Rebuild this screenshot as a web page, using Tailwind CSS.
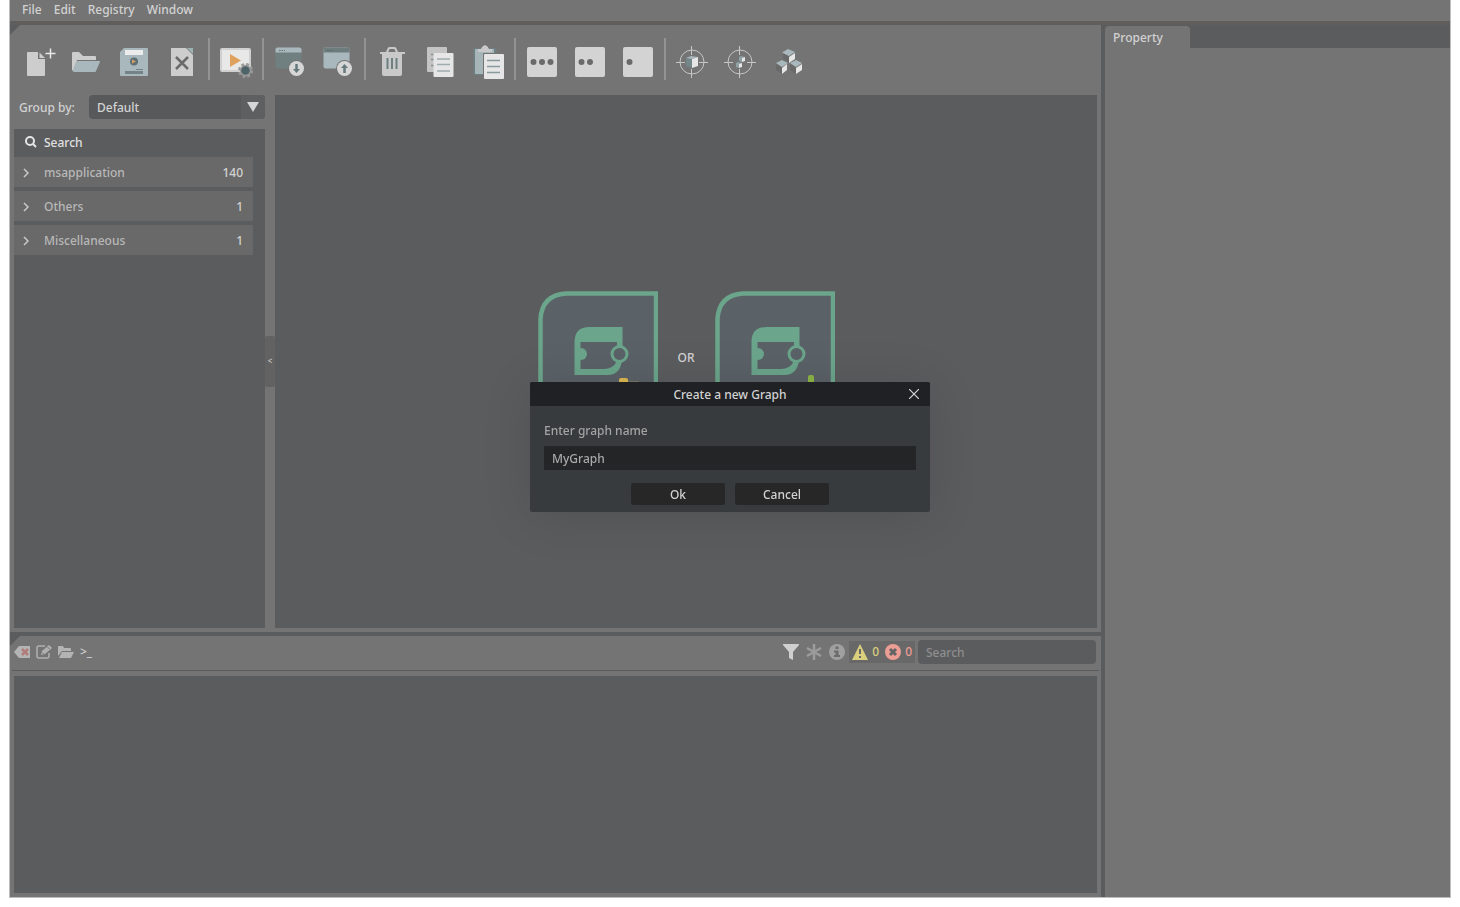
<!DOCTYPE html>
<html lang="en">
  <head>
    <meta charset="UTF-8" />
    <meta name="viewport" content="width=device-width, initial-scale=1.0" />
    <title>Graph Editor</title>
    <script src="https://cdn.jsdelivr.net/npm/@tailwindcss/browser@4"></script>
  </head>
  <body class="bg-white">
    <div class="h-screen px-[9px] pb-[9px] font-['Noto_Sans','Open_Sans',sans-serif] text-xs font-medium text-[#d2d2d2]">
      <div class="flex h-full flex-col border-x border-b border-[#bdbdbd] bg-[#5b5c5e]">
        <!-- Menu bar -->
        <nav class="flex h-[21px] shrink-0 items-center gap-3 bg-[#747474] px-3 pb-[2px]">
          <a href="#">File</a>
          <a href="#">Edit</a>
          <a href="#">Registry</a>
          <a href="#">Window</a>
        </nav>
        <div class="h-1 shrink-0 bg-[#5f5e5c]"></div>

        <div class="flex min-h-0 flex-1 gap-1">
          <div class="flex min-w-0 flex-1 flex-col gap-1">
            <!-- Graph editor -->
            <section class="flex min-h-0 flex-[603] flex-col bg-[#747474] px-1 pb-1 [clip-path:polygon(10px_0,100%_0,100%_100%,0_100%,0_10px)]">
              <div class="flex h-[70px] shrink-0 items-start pt-[13px]">
                <button aria-label="New graph">
                  <svg class="size-12" viewBox="0 0 48 48">
                    <path d="M13 15q0-1 1-1h10v7h7v16q0 1-1 1H14q-1 0-1-1z" fill="#cdcdcd" />
                    <path d="M25.500 14.500v5.500h5.500z" fill="#cdcdcd" />
                    <path d="M36.500 10.500v10M31.500 15.500h10" stroke="#e8e8e8" stroke-width="1.500" />
                  </svg>
                </button>
                <button aria-label="Open graph">
                  <svg class="size-12" viewBox="0 0 48 48">
                    <path d="M10 32V15q0-1 1-1h6l4 4h12q1 0 1 1v3H15l-4 11z" fill="#cdcdcd" />
                    <path d="M15 23h22q1 0 1 1l-4 9q0 1-1 1H12q-1 0-1-1l3-9q0-1 1-1z" fill="#a9b8bd" />
                  </svg>
                </button>
                <button aria-label="Save graph">
                  <svg class="size-12" viewBox="0 0 48 48">
                    <path d="M14 10h23q1 0 1 1v26q0 1-1 1H11q-1 0-1-1V14z" fill="#a9b8bd" />
                    <path d="M15 12h18v5H15z" fill="#ececec" />
                    <circle cx="24" cy="23.500" r="4" fill="#5c7075" />
                    <path d="M22 21.500l4 2-4 2z" fill="#dea05a" />
                    <path d="M15 33h18v3H15z" fill="#738386" />
                    <path d="M26 31.500h7" stroke="#738386" />
                  </svg>
                </button>
                <button aria-label="Close graph">
                  <svg class="size-12" viewBox="0 0 48 48">
                    <path d="M13 10h15l7 7v21H13z" fill="#cdcdcd" />
                    <path d="M29 10h6v6z" fill="#9fb3b5" />
                    <path d="M18 19l12 12M30 19L18 31" stroke="#6b6b6b" stroke-width="2.500" />
                  </svg>
                </button>
                <div class="mx-[2px] h-[42px] w-[2px] bg-[#939393]"></div>
                <button aria-label="Start computing">
                  <svg class="size-12" viewBox="0 0 48 48">
                    <rect x="9" y="11" width="29" height="22" rx="1" fill="#e8e8e8" stroke="#d0d0d0" stroke-width="2" />
                    <path d="M18 16l11 6.500L18 29z" fill="#dfa25c" />
                    <circle cx="33.500" cy="32.500" r="6" fill="none" stroke="#9a9a9a" stroke-width="3" stroke-dasharray="2.700 2" />
                    <circle cx="33.500" cy="32.500" r="5" fill="#4d6368" stroke="#9a9a9a" stroke-width="1.500" />
                  </svg>
                </button>
                <div class="mx-[2px] h-[42px] w-[2px] bg-[#939393]"></div>
                <button aria-label="Import">
                  <svg class="size-12" viewBox="0 0 48 48">
                    <rect x="9.500" y="9.500" width="26" height="21" rx="2" fill="#708081" />
                    <path d="M9.500 14.500v-3q0-2 2-2h22q2 0 2 2v3z" fill="#a9b8bd" />
                    <path d="M13 12.500h6" stroke="#657475" stroke-dasharray="1.500 1" />
                    <circle cx="30.500" cy="30.500" r="8.500" fill="#747474" />
                    <circle cx="30.500" cy="30.500" r="7.500" fill="#d6d6d6" />
                    <path d="M30.500 26v7" stroke="#65787b" stroke-width="2.500" />
                    <path d="M27 31h7l-3.500 4z" fill="#65787b" />
                  </svg>
                </button>
                <button aria-label="Export">
                  <svg class="size-12" viewBox="0 0 48 48">
                    <rect x="9.500" y="9.500" width="26" height="21" rx="2" fill="#a9b8bd" />
                    <path d="M9.500 14.500v-3q0-2 2-2h22q2 0 2 2v3z" fill="#6d7d7e" />
                    <path d="M13 12.500h6" stroke="#556566" stroke-dasharray="1.500 1" />
                    <circle cx="30.500" cy="30.500" r="8.500" fill="#747474" />
                    <circle cx="30.500" cy="30.500" r="7.500" fill="#d6d6d6" />
                    <path d="M30.500 28v7" stroke="#65787b" stroke-width="2.500" />
                    <path d="M27 30h7l-3.500-4z" fill="#65787b" />
                  </svg>
                </button>
                <div class="mx-[2px] h-[42px] w-[2px] bg-[#939393]"></div>
                <button aria-label="Delete">
                  <svg class="size-12" viewBox="0 0 48 48">
                    <path d="M18.500 15l2-4q0-1 1-1h5q1 0 1 1l2 4" fill="none" stroke="#c9c9c9" stroke-width="2" />
                    <path d="M12 14h25v2H12z" fill="#c9c9c9" />
                    <path d="M14 16h20v20q0 2-2 2H16q-2 0-2-2z" fill="#c9c9c9" />
                    <path d="M19.500 20v11M24 20v11M28.500 20v11" stroke="#6d7f80" stroke-width="2" />
                  </svg>
                </button>
                <button aria-label="Copy">
                  <svg class="size-12" viewBox="0 0 48 48">
                    <rect x="11" y="9" width="20" height="25" rx="1" fill="#c4c4c4" />
                    <path d="M15 16.500h3M15 21.500h3M15 27.500h3" stroke="#81918f" stroke-width="1.500" />
                    <rect x="17.500" y="15" width="20" height="24" rx="1" fill="#e6e6e6" />
                    <path d="M21 21h13M21 26.500h13M21 33h13" stroke="#9eacae" stroke-width="1.500" />
                  </svg>
                </button>
                <button aria-label="Paste">
                  <svg class="size-12" viewBox="0 0 48 48">
                    <rect x="9.500" y="10" width="23" height="27" rx="1" fill="#6c8083" />
                    <rect x="11" y="11" width="19" height="25" fill="#a6b5b8" />
                    <path d="M14 14v-3h3q1-3 4-4 3 1 4 4h3v3z" fill="#c9c9c9" />
                    <rect x="19" y="15" width="21" height="25" rx="1" fill="#747474" />
                    <rect x="20" y="16" width="20" height="25" rx="1" fill="#e6e6e6" />
                    <path d="M23 22.500h13M23 28.500h13M23 34.500h13" stroke="#87999c" stroke-width="1.500" />
                  </svg>
                </button>
                <div class="mx-[2px] h-[42px] w-[2px] bg-[#939393]"></div>
                <button aria-label="Maximal view">
                  <svg class="size-12" viewBox="0 0 48 48" fill="#6a6a6a">
                    <rect x="9" y="9" width="30" height="30" rx="2" fill="#d3d3d3" />
                    <circle cx="15.500" cy="24" r="3" />
                    <circle cx="24" cy="24" r="3" />
                    <circle cx="32.500" cy="24" r="3" />
                  </svg>
                </button>
                <button aria-label="Medium view">
                  <svg class="size-12" viewBox="0 0 48 48" fill="#6a6a6a">
                    <rect x="9" y="9" width="30" height="30" rx="2" fill="#d3d3d3" />
                    <circle cx="15.500" cy="24" r="3" />
                    <circle cx="24" cy="24" r="3" />
                  </svg>
                </button>
                <button aria-label="Minimal view">
                  <svg class="size-12" viewBox="0 0 48 48" fill="#6a6a6a">
                    <rect x="9" y="9" width="30" height="30" rx="2" fill="#d3d3d3" />
                    <circle cx="15.500" cy="24" r="3" />
                  </svg>
                </button>
                <div class="mx-[2px] h-[42px] w-[2px] bg-[#939393]"></div>
                <button aria-label="Center selected node">
                  <svg class="size-12" viewBox="0 0 48 48">
                    <circle cx="24" cy="24" r="12" fill="none" stroke="#c6c6c6" />
                    <path d="M8 24.500h9M31 24.500h9M23.500 8v9M23.500 31v9" stroke="#c6c6c6" />
                    <path d="M18 20l6 1v9l-6-2z" fill="#73868a" />
                    <path d="M18 20l5-2 7 1-6 2z" fill="#a9b8bd" />
                    <path d="M24 21l6-2v9l-6 2z" fill="#e6e6e6" />
                  </svg>
                </button>
                <button aria-label="Center all nodes">
                  <svg class="size-12" viewBox="0 0 48 48">
                    <circle cx="24" cy="24" r="12" fill="none" stroke="#c6c6c6" />
                    <path d="M8 24.500h9M31 24.500h9M23.500 8v9M23.500 31v9" stroke="#c6c6c6" />
                    <path d="M23 19l2-1 4 1-3 1v4l-3-1z" fill="#91a2a6" />
                    <path d="M26 20l3-1v4l-3 1z" fill="#e6e6e6" />
                    <path d="M20 25l2-1 4 1-3 1v4l-3-1z" fill="#91a2a6" />
                    <path d="M23 26l3-1v4l-3 1z" fill="#e6e6e6" />
                  </svg>
                </button>
                <button aria-label="Arrange nodes">
                  <svg class="size-12" viewBox="0 0 48 48">
                    <path d="M19 15l6 4v6l-6-4zM12 26l6 4v6l-6-4zM26 26l6 4v6l-6-4z" fill="#696969" />
                    <path d="M18 14.500l6-3.500 7 3-6 4zM12 25l6-3 6 3-6 4zM26 25l6-3 6 3-6 4z" fill="#a9b8bd" />
                    <path d="M25 19l6-4v6l-6 4zM18 30l5-4v6l-5 4zM32 30l6-4v6l-6 4z" fill="#e6e6e6" />
                  </svg>
                </button>
              </div>

              <div class="flex min-h-0 flex-1">
                <!-- Node library -->
                <aside class="flex w-[251px] shrink-0 flex-col gap-[10px]">
                  <div class="flex h-6 shrink-0 items-center justify-between pl-[5px]">
                    <label for="group" class="pt-[2px]">Group by:</label>
                    <div class="relative h-6 w-44 overflow-hidden rounded bg-[#58595b]">
                      <select id="group" class="h-6 w-full appearance-none px-2 pt-[2px]">
                        <option>Default</option>
                      </select>
                      <div class="pointer-events-none absolute inset-y-0 right-0 flex w-6 items-center justify-center bg-[#5e5f60]">
                        <svg class="h-[10px] w-3" viewBox="0 0 12 10"><path d="M0 0h12L6 10z" fill="#d6d6d6" /></svg>
                      </div>
                    </div>
                  </div>
                  <div class="flex-1 bg-[#5b5c5e]">
                    <div class="flex h-7 items-center gap-[7px] pb-[2px] pl-[11px]">
                      <svg class="size-3" viewBox="0 0 12 12" fill="none" stroke="#e4e4e4" stroke-width="2">
                        <circle cx="5" cy="5" r="4" />
                        <path d="M8 8l3 3" />
                      </svg>
                      <input aria-label="Search nodes" placeholder="Search" class="h-6 w-44 outline-none placeholder:text-[#e0e0e0]" />
                    </div>
                    <ul class="flex flex-col gap-1 pr-3">
                      <li class="flex h-[30px] items-center bg-[#696969] pt-[2px] pr-[10px] pl-[9px]">
                        <svg class="mr-[15px] h-[10px] w-[6px]" viewBox="0 0 6 10" fill="none" stroke="#cacaca" stroke-width="1.500"><path d="M1 1l4 4-4 4" /></svg>
                        <span class="flex-1 text-[#b8b8b8]">msapplication</span>
                        <span>140</span>
                      </li>
                      <li class="flex h-[30px] items-center bg-[#696969] pt-[2px] pr-[10px] pl-[9px]">
                        <svg class="mr-[15px] h-[10px] w-[6px]" viewBox="0 0 6 10" fill="none" stroke="#cacaca" stroke-width="1.500"><path d="M1 1l4 4-4 4" /></svg>
                        <span class="flex-1 text-[#b8b8b8]">Others</span>
                        <span>1</span>
                      </li>
                      <li class="flex h-[30px] items-center bg-[#696969] pt-[2px] pr-[10px] pl-[9px]">
                        <svg class="mr-[15px] h-[10px] w-[6px]" viewBox="0 0 6 10" fill="none" stroke="#cacaca" stroke-width="1.500"><path d="M1 1l4 4-4 4" /></svg>
                        <span class="flex-1 text-[#b8b8b8]">Miscellaneous</span>
                        <span>1</span>
                      </li>
                    </ul>
                  </div>
                </aside>
                <div class="flex w-[10px] shrink-0 items-center">
                  <button aria-label="Collapse" class="h-[51px] w-[10px] rounded-xs bg-[#626262] text-[8px]">&lt;</button>
                </div>

                <!-- Canvas -->
                <main class="flex flex-1 items-center justify-center gap-5 bg-[#5b5c5e] pb-[9px]">
                  <button aria-label="Create a graph" class="h-[132px] w-[120px]">
                    <svg class="h-[132px] w-[120px]" viewBox="0 0 120 132">
                      <path d="M2.500 130V28Q4 4 28 2.500h90V130z" fill="#5a6167" stroke="#6ba58b" stroke-width="4.500" />
                      <path fill-rule="evenodd" d="M36.500 84V51q0-15 15-15h33v27q0 21-15 21zM42.500 51v27H66q9 0 13-8V51z" fill="#6ba58b" />
                      <circle cx="43" cy="63" r="6" fill="#6ba58b" />
                      <circle cx="81.500" cy="63" r="7.500" fill="#5a6167" stroke="#6ba58b" stroke-width="3" />
                      <rect x="81" y="87" width="9" height="20" rx="2" fill="#dcb850" />
                      <path d="M90 90.500h11" stroke="#7a7763" />
                    </svg>
                  </button>
                  <span class="pt-[2px]">OR</span>
                  <button aria-label="Load a graph" class="h-[132px] w-[120px]">
                    <svg class="h-[132px] w-[120px]" viewBox="0 0 120 132">
                      <path d="M2.500 130V28Q4 4 28 2.500h90V130z" fill="#5a6167" stroke="#6ba58b" stroke-width="4.500" />
                      <path fill-rule="evenodd" d="M36.500 84V51q0-15 15-15h33v27q0 21-15 21zM42.500 51v27H66q9 0 13-8V51z" fill="#6ba58b" />
                      <circle cx="43" cy="63" r="6" fill="#6ba58b" />
                      <circle cx="81.500" cy="63" r="7.500" fill="#5a6167" stroke="#6ba58b" stroke-width="3" />
                      <rect x="93" y="84" width="6" height="20" rx="2" fill="#8db545" />
                    </svg>
                  </button>
                </main>
              </div>
            </section>

            <!-- Console -->
            <section class="flex min-h-0 flex-[257] flex-col bg-[#747474] pb-1 [clip-path:polygon(10px_0,100%_0,100%_100%,0_100%,0_10px)]">
              <div class="mx-[2px] flex h-[35px] shrink-0 items-center justify-between border-b border-[#5b5c5e] pr-[3px] pb-[2px] pl-[2px]">
                <div class="flex items-center gap-[6px]">
                  <button aria-label="Clear">
                    <svg class="size-4" viewBox="0 0 16 16">
                      <path d="M0 8l5-6h11v12H5z" fill="#b4b4b4" />
                      <path d="M8 5l6 6M14 5l-6 6" stroke="#b27c7a" stroke-width="2.500" />
                    </svg>
                  </button>
                  <button aria-label="Edit log">
                    <svg class="size-4" viewBox="0 0 16 16" fill="none" stroke="#b0b0b0" stroke-width="1.500">
                      <path d="M9 2H3Q1 2 1 4v8q0 2 2 2h8q2 0 2-2V9" />
                      <path d="M5 11l1-4 7-6 3 3-7 6z" fill="#b0b0b0" stroke="none" />
                      <path d="M11.500 3l2 2M6 8.500l1.500 1.500" stroke="#747474" stroke-width="1" />
                    </svg>
                  </button>
                  <button aria-label="Open log">
                    <svg class="size-4" viewBox="0 0 16 16" fill="#b4b4b4">
                      <path d="M0 12V3q0-1 1-1h4l1 2h6q1 0 1 1v2H4z" />
                      <path d="M4 8h12l-3 6H1z" />
                    </svg>
                  </button>
                  <button aria-label="Terminal">&gt;_</button>
                </div>
                <div class="flex items-center">
                  <div class="mr-1 flex gap-[7px]">
                    <button aria-label="Filter">
                      <svg class="size-4" viewBox="0 0 16 16"><path d="M0 0h16v1l-6 7v8l-4-2V8L0 1z" fill="#cfcfcf" /></svg>
                    </button>
                    <button aria-label="All messages">
                      <svg class="size-4" viewBox="0 0 16 16"><path d="M8 0v16M1 4l14 8M15 4L1 12" stroke="#9c9c9c" stroke-width="2.500" /></svg>
                    </button>
                    <button aria-label="Information">
                      <svg class="size-4" viewBox="0 0 16 16">
                        <circle cx="8" cy="8" r="8" fill="#a0a0a0" />
                        <path d="M6.500 2.500h3v2.500h-3zM5 6.500h4.500V11H11v2H5v-2h1.500V8.500H5z" fill="#6c6c6c" />
                      </svg>
                    </button>
                  </div>
                  <div class="mr-[3px] flex h-[22px] items-center gap-[6px] bg-[#686868] px-[3px]">
                    <button class="flex items-center gap-1 text-[#d9cf7c]">
                      <svg class="size-4" viewBox="0 0 16 16">
                        <path d="M8 0l8 16H0z" fill="#d9cf7c" />
                        <path d="M7 5h2v5H7zM7 12h2v2H7z" fill="#686868" />
                      </svg>
                      0
                    </button>
                    <button class="flex items-center gap-1 text-[#ec9d94]">
                      <svg class="size-4" viewBox="0 0 16 16">
                        <circle cx="8" cy="8" r="8" fill="#ec9d94" />
                        <path d="M5 5l6 6M11 5l-6 6" stroke="#646464" stroke-width="3" />
                      </svg>
                      0
                    </button>
                  </div>
                  <input aria-label="Search log" placeholder="Search" class="h-6 w-[178px] rounded bg-[#5b5c5e] px-2 outline-none placeholder:text-[#8e8e8e]" />
                </div>
              </div>
              <div class="mx-1 mt-[5px] flex-1 bg-[#5b5c5e]"></div>
            </section>
          </div>

          <!-- Property panel -->
          <aside class="flex w-[345px] shrink-0 flex-col pt-px">
            <h2 class="flex h-[22px] w-[85px] shrink-0 items-center rounded-t bg-[#747474] px-2 pt-[2px]">Property</h2>
            <div class="flex-1 bg-[#747474]"></div>
          </aside>
        </div>
      </div>

      <!-- Create graph dialog -->
      <div class="fixed inset-0 flex items-center justify-center pb-[13px]">
        <form role="dialog" aria-labelledby="dialog-title" class="w-[400px] overflow-hidden rounded-xs bg-[#373b3e] shadow-[0_4px_50px_rgba(0,0,0,0.12)]">
          <div class="relative flex h-6 items-center justify-center bg-[#202124]">
            <h1 id="dialog-title" class="pt-[2px]">Create a new Graph</h1>
            <button type="button" aria-label="Close" class="absolute right-[11px]">
              <svg class="size-[10px]" viewBox="0 0 10 10"><path d="M0 0l10 10M10 0L0 10" stroke="#d8d8d8" stroke-width="1.200" /></svg>
            </button>
          </div>
          <div class="flex flex-col px-[14px] pt-4 pb-[7px]">
            <label for="graph-name" class="h-6 leading-[18px] text-[#a3a3a3]">Enter graph name</label>
            <input id="graph-name" value="MyGraph" class="h-6 bg-[#242527] px-2 text-[#a9a9a9] outline-none" />
            <div class="mt-[13px] flex justify-center gap-[10px]">
              <button type="button" class="h-[22px] w-[94px] rounded-xs bg-[#272727] pt-[2px]">Ok</button>
              <button type="button" class="h-[22px] w-[94px] rounded-xs bg-[#272727] pt-[2px]">Cancel</button>
            </div>
          </div>
        </form>
      </div>
    </div>
  </body>
</html>
